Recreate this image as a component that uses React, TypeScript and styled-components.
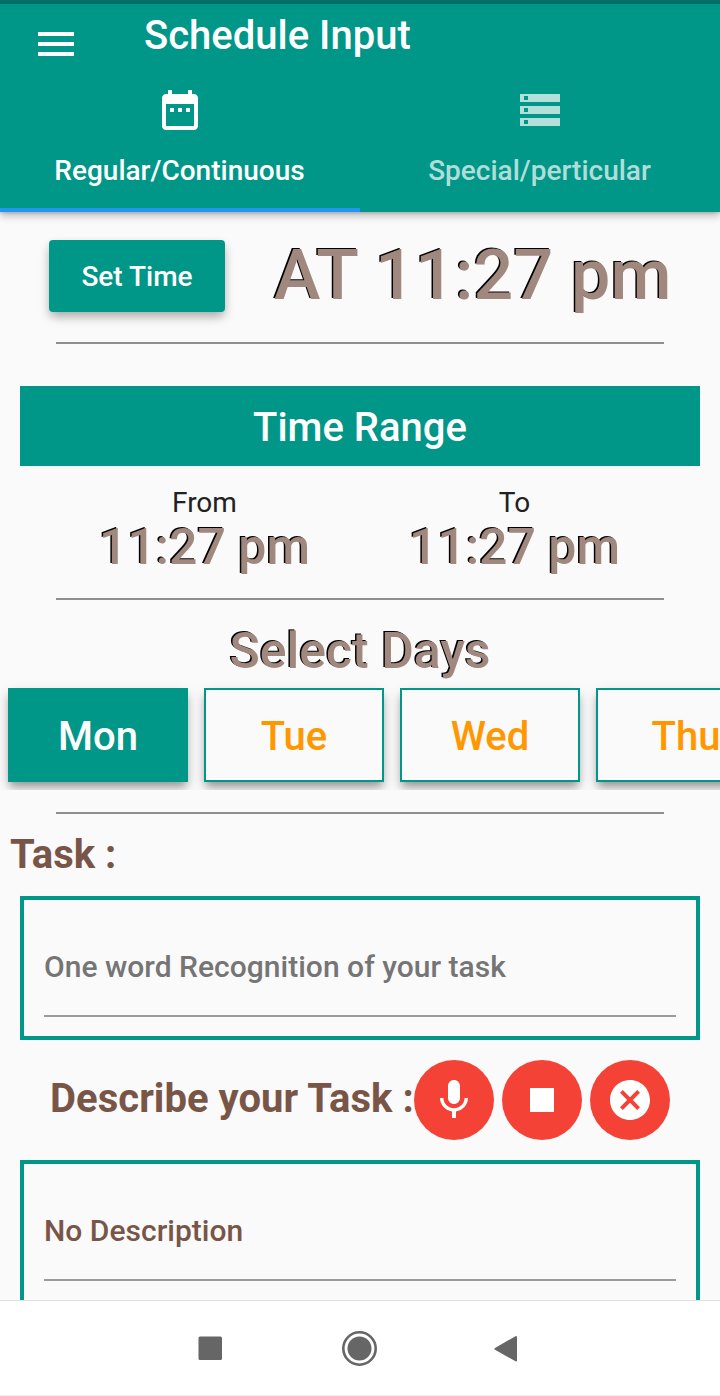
import React from "react";
import styled, { createGlobalStyle } from "styled-components";

const teal = "#009688";
const paper = "#fafafa";

const GlobalStyle = createGlobalStyle`
  *, *::before, *::after { box-sizing: border-box; }
  body {
    margin: 0;
    background: ${paper};
    font-family: Roboto, "Liberation Sans", sans-serif;
    overflow: hidden;
  }
  button { font-family: inherit; border: 0; padding: 0; cursor: pointer; }
`;

const Screen = styled.div`
  width: 720px;
  height: 1396px;
  display: flex;
  flex-direction: column;
  overflow: hidden;
  background: ${paper};
`;

const StatusBar = styled.div`
  flex: none;
  height: 4px;
  background: #007368;
`;

const Header = styled.header`
  flex: none;
  height: 208px;
  background: ${teal};
  color: #fff;
  box-shadow: 0 4px 8px rgba(0, 0, 0, 0.24), 0 1px 3px rgba(0, 0, 0, 0.16);
  z-index: 1;
`;

const TitleRow = styled.div`
  display: flex;
  align-items: flex-start;
  height: 72px;
  padding-left: 32px;
`;

const MenuButton = styled.button`
  display: flex;
  margin-top: 16px;
  margin-right: 64px;
  color: inherit;
  background: none;
`;

const Title = styled.h1`
  margin: 9px 0 0;
  font-size: 40px;
  font-weight: 500;
  line-height: 46px;
`;

const Tabs = styled.nav`
  display: grid;
  grid-template-columns: 1fr 1fr;
  height: 136px;
`;

const Tab = styled.button<{ $active?: boolean }>`
  display: flex;
  flex-direction: column;
  align-items: center;
  padding-top: 10px;
  background: none;
  color: ${(p) => (p.$active ? "#fff" : "rgba(255, 255, 255, 0.7)")};
  border-bottom: 4px solid ${(p) => (p.$active ? "#2196f3" : "transparent")};
  font-size: 28px;
  font-weight: 500;
  line-height: 32px;
`;

const TabLabel = styled.span`
  margin-top: 21px;
  padding-right: 1px;
`;

const Content = styled.main`
  flex: 1;
  min-height: 0;
  overflow: hidden;
  display: flex;
  flex-direction: column;
`;

const Divider = styled.hr<{ $top?: number }>`
  flex: none;
  width: 608px;
  height: 2px;
  margin: ${(p) => p.$top ?? 0}px auto 0;
  border: 0;
  background: #8e8e8e;
`;

const AtRow = styled.section`
  flex: none;
  display: flex;
  align-items: flex-start;
  height: 130px;
  padding: 28px 0 0 49px;
`;

const SetTimeButton = styled.button`
  width: 176px;
  height: 72px;
  margin-right: 49px;
  border-radius: 4px;
  background: ${teal};
  color: #fff;
  font-size: 28px;
  font-weight: 500;
  box-shadow: 0 6px 12px -2px rgba(0, 0, 0, 0.26), 0 4px 10px rgba(0, 0, 0, 0.12);
`;

const Embossed = styled.div<{ $size: number; $line: number; $spacing?: number }>`
  font-size: ${(p) => p.$size}px;
  line-height: ${(p) => p.$line}px;
  letter-spacing: ${(p) => p.$spacing ?? 0}px;
  font-weight: 500;
  color: #a1887f;
  text-shadow: -1.5px -1px 0 #000;
  white-space: nowrap;
`;

const RangeTitle = styled.h2`
  flex: none;
  height: 80px;
  margin: 42px 20px 0;
  background: ${teal};
  color: #fff;
  font-size: 40px;
  font-weight: 500;
  line-height: 84px;
  text-align: center;
`;

const RangeRow = styled.section`
  flex: none;
  display: flex;
  justify-content: space-between;
  height: 132px;
  padding: 20px 100px 0 99px;
`;

const RangeColumn = styled.div`
  display: flex;
  flex-direction: column;
  align-items: center;
`;

const RangeLabel = styled.div`
  height: 32px;
  font-size: 28px;
  line-height: 33px;
  color: #212121;
`;

const DaysHeading = styled.div`
  flex: none;
  display: flex;
  justify-content: center;
  height: 80px;
  padding-top: 22px;
`;

const DayStrip = styled.div`
  flex: none;
  display: flex;
  gap: 16px;
  height: 110px;
  padding: 8px;
  overflow: hidden;
`;

const DayCard = styled.button<{ $selected?: boolean }>`
  flex: none;
  width: 180px;
  height: 94px;
  padding-top: 2px;
  border: 2px solid ${teal};
  background: ${(p) => (p.$selected ? teal : paper)};
  color: ${(p) => (p.$selected ? "#fff" : "#ff9800")};
  font-size: 40px;
  font-weight: 500;
  box-shadow: 0 7px 8px -2px rgba(0, 0, 0, 0.28), 0 5px 12px rgba(0, 0, 0, 0.16);
`;

const SectionLabel = styled.h3`
  margin: 0;
  color: #795548;
  font-size: 40px;
  font-weight: 700;
  line-height: 46px;
  white-space: nowrap;
`;

const TaskHeading = styled.div`
  flex: none;
  height: 82px;
  padding: 18px 0 0 10px;
`;

const FieldBox = styled.div`
  flex: none;
  height: 144px;
  margin: 0 20px;
  padding: 46px 20px 0;
  border: 4px solid ${teal};
`;

const Field = styled.div<{ $muted?: boolean }>`
  height: 71px;
  border-bottom: 2px solid #9a9a9a;
  color: ${(p) => (p.$muted ? "#757575" : "#795548")};
  font-size: 30px;
  font-weight: 500;
  line-height: 42px;
  letter-spacing: 0.02px;
  white-space: nowrap;
`;

const DescribeRow = styled.section`
  flex: none;
  display: flex;
  align-items: center;
  gap: 8px;
  height: 120px;
  padding: 0 50px;
`;

const DescribeLabel = styled(SectionLabel)`
  width: 356px;
  margin-top: -2px;
  letter-spacing: 0.04px;
`;

const RoundButton = styled.button`
  flex: none;
  display: flex;
  align-items: center;
  justify-content: center;
  width: 80px;
  height: 80px;
  border-radius: 50%;
  background: #f44336;
  color: #fff;
`;

const SystemNav = styled.footer`
  flex: none;
  height: 96px;
  background: #fff;
  border-top: 1px solid #e0e0e0;
  border-bottom: 1px solid #f0f0f0;
`;

const Icon = ({ d }: { d: string }) => (
  <svg width="48" height="48" viewBox="0 0 24 24" fill="currentColor" aria-hidden>
    <path d={d} />
  </svg>
);

const icons = {
  menu: "M3 18h18v-2H3v2zm0-5h18v-2H3v2zm0-7v2h18V6H3z",
  dateRange:
    "M9 11H7v2h2v-2zm4 0h-2v2h2v-2zm4 0h-2v2h2v-2zm2-7h-1V2h-2v2H8V2H6v2H5c-1.11 0-1.99.9-1.99 2L3 20c0 1.1.89 2 2 2h14c1.1 0 2-.9 2-2V6c0-1.1-.9-2-2-2zm0 16H5V9h14v11z",
  storage:
    "M2 20h20v-4H2v4zm2-3h2v2H4v-2zM2 4v4h20V4H2zm4 3H4V5h2v2zm-4 7h20v-4H2v4zm2-3h2v2H4v-2z",
  mic: "M12 14c1.66 0 3-1.34 3-3V5c0-1.66-1.34-3-3-3S9 3.34 9 5v6c0 1.66 1.34 3 3 3zm5.3-3c0 3-2.54 5.1-5.3 5.1S6.7 14 6.7 11H5c0 3.41 2.72 6.23 6 6.72V21h2v-3.28c3.28-.48 6-3.3 6-6.72h-1.7z",
  stop: "M6 6h12v12H6z",
  cancel:
    "M12 2C6.47 2 2 6.47 2 12s4.47 10 10 10 10-4.47 10-10S17.53 2 12 2zm5 13.59L15.59 17 12 13.41 8.41 17 7 15.59 10.59 12 7 8.41 8.41 7 12 10.59 15.59 7 17 8.41 13.41 12 17 15.59z",
};

const days = ["Mon", "Tue", "Wed", "Thu"];

export default function App() {
  return (
    <>
      <GlobalStyle />
      <Screen>
        <StatusBar />
        <Header>
          <TitleRow>
            <MenuButton aria-label="Menu">
              <Icon d={icons.menu} />
            </MenuButton>
            <Title>Schedule Input</Title>
          </TitleRow>
          <Tabs>
            <Tab $active>
              <Icon d={icons.dateRange} />
              <TabLabel>Regular/Continuous</TabLabel>
            </Tab>
            <Tab>
              <Icon d={icons.storage} />
              <TabLabel>Special/perticular</TabLabel>
            </Tab>
          </Tabs>
        </Header>
        <Content>
          <AtRow>
            <SetTimeButton>Set Time</SetTimeButton>
            <Embossed $size={70} $line={70} $spacing={0.15}>AT 11:27 pm</Embossed>
          </AtRow>
          <Divider />
          <RangeTitle>Time Range</RangeTitle>
          <RangeRow>
            {["From", "To"].map((label) => (
              <RangeColumn key={label}>
                <RangeLabel>{label}</RangeLabel>
                <Embossed $size={50} $line={58}>11:27 pm</Embossed>
              </RangeColumn>
            ))}
          </RangeRow>
          <Divider />
          <DaysHeading>
            <Embossed $size={50} $line={58}>Select Days</Embossed>
          </DaysHeading>
          <DayStrip>
            {days.map((day, i) => (
              <DayCard key={day} $selected={i === 0}>{day}</DayCard>
            ))}
          </DayStrip>
          <Divider $top={22} />
          <TaskHeading>
            <SectionLabel>Task :</SectionLabel>
          </TaskHeading>
          <FieldBox>
            <Field $muted>One word Recognition of your task</Field>
          </FieldBox>
          <DescribeRow>
            <DescribeLabel>Describe your Task :</DescribeLabel>
            <RoundButton aria-label="Record"><Icon d={icons.mic} /></RoundButton>
            <RoundButton aria-label="Stop"><Icon d={icons.stop} /></RoundButton>
            <RoundButton aria-label="Cancel"><Icon d={icons.cancel} /></RoundButton>
          </DescribeRow>
          <FieldBox>
            <Field>No Description</Field>
          </FieldBox>
        </Content>
        <SystemNav>
          <svg width="720" height="94" viewBox="0 1301 720 94" fill="#666">
            <rect x="198.5" y="1336.5" width="23.5" height="23.5" rx="1.5" />
            <circle cx="359.5" cy="1348.5" r="16.2" fill="none" stroke="#666" strokeWidth="2.6" />
            <circle cx="359.5" cy="1348.5" r="12" />
            <path d="M495.5 1348.8L516 1337v23.400z" stroke="#666" strokeWidth="2" strokeLinejoin="round" />
          </svg>
        </SystemNav>
      </Screen>
    </>
  );
}
